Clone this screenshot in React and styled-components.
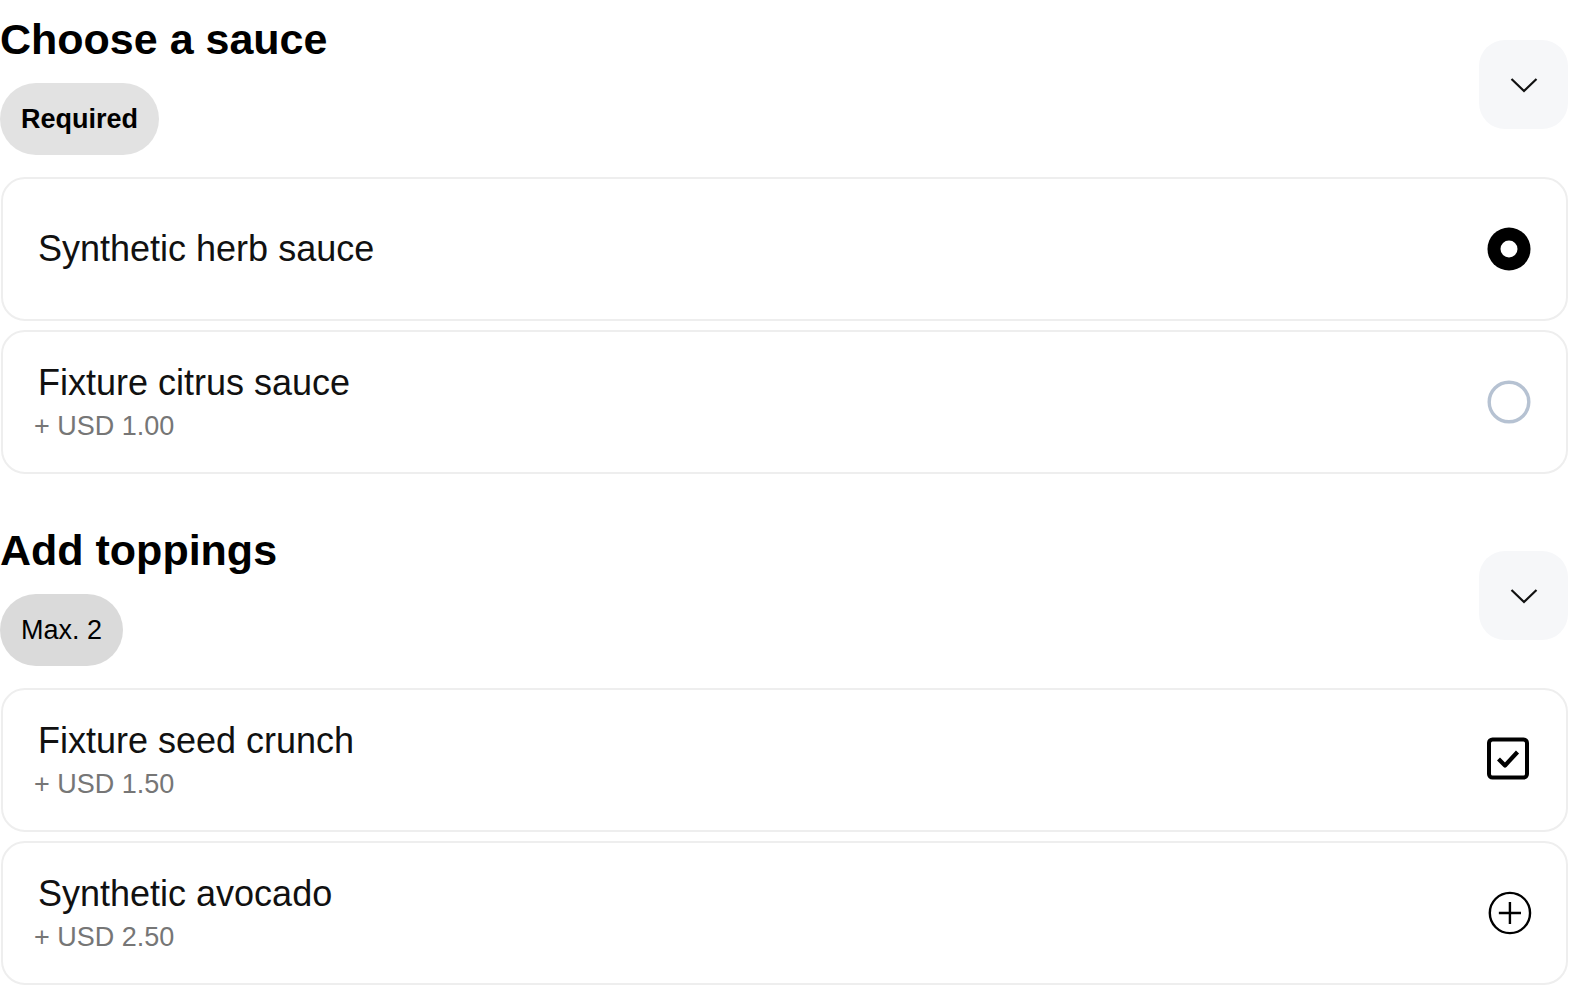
import React, { useState } from "react";
import styled, { createGlobalStyle } from "styled-components";

const GlobalStyle = createGlobalStyle`
  html, body {
    overflow: hidden;
  }
  body {
    margin: 0;
    background: #ffffff;
    font-family: "Liberation Sans", Arial, Helvetica, sans-serif;
    color: #000;
  }
`;

const sauces = [
  { id: "herb", name: "Synthetic herb sauce" },
  { id: "citrus", name: "Fixture citrus sauce", price: "+ USD 1.00" },
];

const toppings = [
  { id: "seed", name: "Fixture seed crunch", price: "+ USD 1.50" },
  { id: "avocado", name: "Synthetic avocado", price: "+ USD 2.50" },
];

function Chevron() {
  return (
    <svg width="28" height="16" viewBox="0 0 28 16" fill="none">
      <path d="M1.5 2 L14 14 L26.5 2" stroke="#111" strokeWidth="2.2" />
    </svg>
  );
}

function RadioIcon({ on }) {
  if (on) {
    return (
      <svg width="48" height="48" viewBox="0 0 48 48">
        <circle cx="24" cy="24" r="21.5" fill="#000" />
        <circle cx="24" cy="24" r="8.5" fill="#fff" />
      </svg>
    );
  }
  return (
    <svg width="48" height="48" viewBox="0 0 48 48" fill="none">
      <circle cx="24" cy="24" r="19.8" stroke="#b6c2d2" strokeWidth="3.4" />
    </svg>
  );
}

function CheckIcon() {
  return (
    <svg width="48" height="48" viewBox="0 0 48 48" fill="none">
      <rect x="4" y="3.5" width="38" height="38" rx="3.5" stroke="#000" strokeWidth="4" />
      <path d="M13.5 23 L20 29.5 L32.5 16" stroke="#000" strokeWidth="4.2" strokeLinejoin="round" />
    </svg>
  );
}

function PlusIcon() {
  return (
    <svg width="52" height="48" viewBox="0 0 52 48" fill="none">
      <circle cx="27" cy="24" r="21.8" stroke="#000" strokeWidth="2.6" />
      <path d="M27 12 V36 M15 24 H39" stroke="#000" strokeWidth="2.6" />
    </svg>
  );
}

function OptionGroup({ title, badge, badgeBold, children }) {
  const [open, setOpen] = useState(true);
  return (
    <Section>
      <Header>
        <HeaderText>
          <Title>{title}</Title>
          <Chip bold={badgeBold}>{badge}</Chip>
        </HeaderText>
        <CollapseBtn onClick={() => setOpen(!open)} aria-label="Toggle">
          <Chevron />
        </CollapseBtn>
      </Header>
      {open && <OptionList>{children}</OptionList>}
    </Section>
  );
}

function OptionRow({ name, price, icon }) {
  return (
    <Card>
      <Label>
        <OptionName>{name}</OptionName>
        {price && <Price>{price}</Price>}
      </Label>
      <IconSlot>{icon}</IconSlot>
    </Card>
  );
}

export default function App() {
  const [sauce, setSauce] = useState("herb");

  return (
    <>
      <GlobalStyle />
      <Page>
        <OptionGroup title="Choose a sauce" badge="Required" badgeBold>
          {sauces.map((s) => (
            <div key={s.id} onClick={() => setSauce(s.id)}>
              <OptionRow name={s.name} price={s.price} icon={<RadioIcon on={sauce === s.id} />} />
            </div>
          ))}
        </OptionGroup>
        <OptionGroup title="Add toppings" badge="Max. 2">
          <OptionRow name={toppings[0].name} price={toppings[0].price} icon={<CheckIcon />} />
          <OptionRow name={toppings[1].name} price={toppings[1].price} icon={<PlusIcon />} />
        </OptionGroup>
      </Page>
    </>
  );
}

const Page = styled.div`
  width: 1568px;
  display: flex;
  flex-direction: column;
  gap: 37px;
`;

const Section = styled.section`
  display: flex;
  flex-direction: column;
`;

const Header = styled.div`
  display: flex;
  justify-content: space-between;
  align-items: flex-start;
`;

const HeaderText = styled.div`
  display: flex;
  flex-direction: column;
  align-items: flex-start;
`;

const Title = styled.h2`
  margin: 14px 0 0;
  font-size: 43px;
  line-height: 50px;
  font-weight: 700;
  letter-spacing: 0;
`;

const Chip = styled.span`
  margin-top: 19px;
  height: 72px;
  padding: 0 21px;
  border-radius: 36px;
  background: ${(p) => (p.bold ? "#e2e2e2" : "#dadada")};
  font-size: 27px;
  line-height: 72px;
  font-weight: ${(p) => (p.bold ? 700 : 400)};
  color: #000;
`;

const CollapseBtn = styled.button`
  margin-top: 40px;
  width: 89px;
  height: 89px;
  border: none;
  border-radius: 26px;
  background: #f6f7f9;
  display: flex;
  align-items: center;
  justify-content: center;
  padding: 0;
  cursor: pointer;
`;

const OptionList = styled.div`
  margin-top: 22px;
  display: flex;
  flex-direction: column;
  gap: 9px;
`;

const Card = styled.div`
  box-sizing: border-box;
  height: 144px;
  margin-left: 1px;
  border: 2px solid #eeeeee;
  border-radius: 24px;
  padding: 0 33px 0 35px;
  display: flex;
  align-items: center;
  justify-content: space-between;
  background: #fff;
  cursor: pointer;
`;

const Label = styled.div`
  display: flex;
  flex-direction: column;
`;

const OptionName = styled.div`
  font-size: 36px;
  line-height: 44px;
  color: #111;
`;

const Price = styled.div`
  font-size: 27px;
  line-height: 36px;
  margin-top: 3px;
  color: #767676;
  margin-left: -4px;
`;

const IconSlot = styled.div`
  width: 48px;
  height: 48px;
  display: flex;
  align-items: center;
  justify-content: flex-start;
  overflow: visible;
`;
